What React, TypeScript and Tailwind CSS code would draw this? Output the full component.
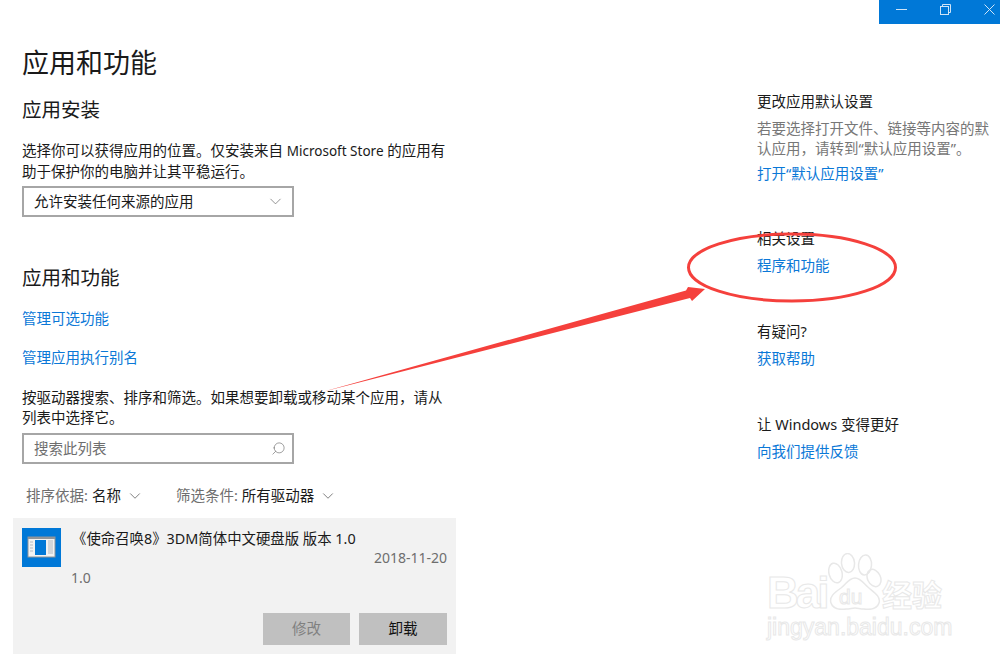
import React from "react";
import { ChevronDown, Search } from "lucide-react";

const sideLink = "block text-[14.5px] leading-5 text-[#0a78d7]";
const sideHead = "text-[14.5px] leading-5 text-[#1a1a1a]";

const AppIcon = () => (
    <svg width="39" height="39" viewBox="0 0 39 39" className="shrink-0">
        <rect width="39" height="39" fill="#0078d7" />
        <rect x="6" y="9" width="27" height="20" fill="#f2f2f2" stroke="#8f9499" strokeWidth="1" />
        <rect x="6" y="9" width="27" height="2" fill="#8f9499" />
        <rect x="13" y="12" width="11" height="15" fill="#0078d7" />
        <path d="M8 14h3M8 17h3M8 20h3M8 23h3M26 13h5M26 15h5M26 17h5M26 19h5M26 21h5M26 23h5M26 25h5" stroke="#b4bac0" strokeWidth="1" />
    </svg>
);

const BaiduMark = () => (
    <div className="absolute left-[767px] top-[553px] w-[190px] h-[90px] pointer-events-none">
        <div className="flex items-end h-[57px]">
            <span className="w-[61px] mb-[-5px] text-[44px] leading-[44px] font-bold tracking-[-3px] text-white [-webkit-text-stroke:1px_#e8e8e8] font-['Liberation_Sans']">Bai</span>
            <svg width="54" height="57" viewBox="0 0 54 57" fill="none" stroke="#e8e8e8" strokeWidth="1.5">
                <ellipse cx="7.5" cy="20" rx="6.5" ry="10" transform="rotate(-15 7.5 20)" />
                <ellipse cx="20" cy="10" rx="6.5" ry="9.5" transform="rotate(-5 20 10)" />
                <ellipse cx="37" cy="12" rx="6.5" ry="10" transform="rotate(5 37 12)" />
                <ellipse cx="46" cy="25" rx="6.5" ry="9" transform="rotate(-25 46 25)" />
                <path d="M27 25c-6 0-9 6-14 10-7 5-12 9-10 15 2 6 8 7 15 6 4 0 6-1 9-1s5 1 9 1c7 1 13 0 15-6 2-6-4-10-10-15-5-4-8-10-14-10z" />
                <text x="11" y="51" fontSize="21" fontFamily="Liberation Sans" fill="#fff" stroke="#e8e8e8" strokeWidth="1">du</text>
            </svg>
            <span className="mb-[-2px] text-[30px] leading-[34px] font-bold text-white [-webkit-text-stroke:1px_#e8e8e8] whitespace-nowrap">经验</span>
        </div>
        <div className="text-[23px] leading-6 mt-[5px] text-white [-webkit-text-stroke:1px_#e8e8e8] font-['Liberation_Sans'] whitespace-nowrap">jingyan.baidu.com</div>
    </div>
);

const App = () => {
    return (
        <div className="relative w-[1000px] h-[660px] overflow-hidden bg-white text-[#1a1a1a] font-['Noto_Sans','Noto_Sans_CJK_SC',sans-serif]">
            <div className="flex justify-end h-[24px]">
                <div className="w-[121px] bg-[#0078d7] flex items-start gap-[33px] pl-[17px] pt-[4px] text-[#cfe4f7]">
                    <svg width="11" height="11" viewBox="0 0 11 11" stroke="currentColor" fill="none"><path d="M0 5.5h11" /></svg>
                    <svg width="11" height="11" viewBox="0 0 11 11" stroke="currentColor" fill="none"><rect x="0.5" y="2.5" width="8" height="8" /><path d="M2.5 2.5v-2h8v8h-2" /></svg>
                    <svg width="11" height="11" viewBox="0 0 11 11" stroke="currentColor" fill="none"><path d="M0.5 0.5l10 10M10.5 0.5l-10 10" /></svg>
                </div>
            </div>

            <div className="flex">
                <div className="w-[757px] shrink-0">
                    <div className="pl-[22px]">
                        <h1 className="text-[27px] leading-[38px] mt-[20px]">应用和功能</h1>
                        <h2 className="text-[19.5px] leading-7 mt-[14px]">应用安装</h2>
                        <p className="text-[14.5px] leading-5 mt-[16px] whitespace-nowrap">
                            选择你可以获得应用的位置。仅安装来自 <span className="text-[13.5px]">Microsoft Store</span> 的应用有
                            <br />
                            助于保护你的电脑并让其平稳运行。
                        </p>
                        <div className="w-[272px] h-[31px] mt-[5px] border-2 border-[#a6a6a6] flex items-center justify-between pl-[10px] pr-[7px] text-[14.5px]">
                            <span>允许安装任何来源的应用</span>
                            <ChevronDown size={19} strokeWidth={1} className="text-[#777]" />
                        </div>
                        <h2 className="text-[19.5px] leading-7 mt-[47px]">应用和功能</h2>
                        <a className="block text-[14.5px] leading-5 text-[#0a78d7] mt-[16px]">管理可选功能</a>
                        <a className="block text-[14.5px] leading-5 text-[#0a78d7] mt-[19px]">管理应用执行别名</a>
                        <p className="text-[14.5px] leading-5 mt-[20px] whitespace-nowrap">
                            按驱动器搜索、排序和筛选。如果想要卸载或移动某个应用，请从
                            <br />
                            列表中选择它。
                        </p>
                        <div className="w-[272px] h-[31px] mt-[6px] border-2 border-[#a6a6a6] flex items-center justify-between pl-[10px] pr-[6px] text-[14.5px] text-[#6e6e6e]">
                            <span>搜索此列表</span>
                            <Search size={15} strokeWidth={1} className="-scale-x-100 text-[#666]" />
                        </div>
                        <div className="flex items-center h-5 mt-[22px] pl-[4px] text-[14.5px]">
                            <span className="text-[#6e6e6e]">排序依据:</span>
                            <span className="ml-1">名称</span>
                            <ChevronDown size={18} strokeWidth={1} className="ml-[5px] text-[#555]" />
                            <span className="ml-[32px] text-[#6e6e6e]">筛选条件:</span>
                            <span className="ml-1">所有驱动器</span>
                            <ChevronDown size={18} strokeWidth={1} className="ml-[5px] text-[#555]" />
                        </div>
                    </div>
                    <div className="ml-[13px] mt-[12px] w-[443px] h-[136px] bg-[#f2f2f2] pl-[9px] pr-[9px] pt-[10px]">
                        <div className="flex">
                            <AppIcon />
                            <div className="flex-1 ml-[10px] mt-[1px]">
                                <div className="text-[14.4px] leading-5 ml-[1px]">《使命召唤8》3DM简体中文硬盘版 版本 1.0</div>
                                <div className="text-right text-[14px] leading-5 text-[#6e6e6e] -mt-[1px]">2018-11-20</div>
                                <div className="text-[14px] leading-5 text-[#6e6e6e]">1.0</div>
                            </div>
                        </div>
                        <div className="flex justify-end gap-[9px] mt-[25px]">
                            <button className="w-[87px] h-[32px] bg-[#c0c0c0] text-[14.5px] text-[#808080]">修改</button>
                            <button className="w-[88px] h-[32px] bg-[#c0c0c0] text-[14.5px] text-[#111]">卸载</button>
                        </div>
                    </div>
                </div>

                <div className="w-[240px] shrink-0">
                    <div className={`${sideHead} mt-[67px]`}>更改应用默认设置</div>
                    <p className="text-[14.5px] leading-5 text-[#777] mt-[7px] whitespace-nowrap">
                        若要选择打开文件、链接等内容的默
                        <br />
                        认应用，请转到“默认应用设置”。
                    </p>
                    <a className={`${sideLink} mt-[5px]`}>打开“默认应用设置”</a>
                    <div className={`${sideHead} mt-[45px]`}>相关设置</div>
                    <a className={`${sideLink} mt-[7px]`}>程序和功能</a>
                    <div className={`${sideHead} mt-[46px]`}>有疑问?</div>
                    <a className={`${sideLink} mt-[7px]`}>获取帮助</a>
                    <div className={`${sideHead} mt-[46px]`}>让 Windows 变得更好</div>
                    <a className={`${sideLink} mt-[7px]`}>向我们提供反馈</a>
                </div>
            </div>

            <svg width="1000" height="660" viewBox="0 0 1000 660" fill="none" className="absolute inset-0 pointer-events-none">
                <ellipse cx="792" cy="267.5" rx="103.5" ry="33.5" stroke="#f5403c" strokeWidth="3" />
                <path d="M322 392L686 290.5L688 287L705 289L692 301L690 298Z" fill="#f5403c" />
            </svg>

            <BaiduMark />
        </div>
    );
};

export default App;
